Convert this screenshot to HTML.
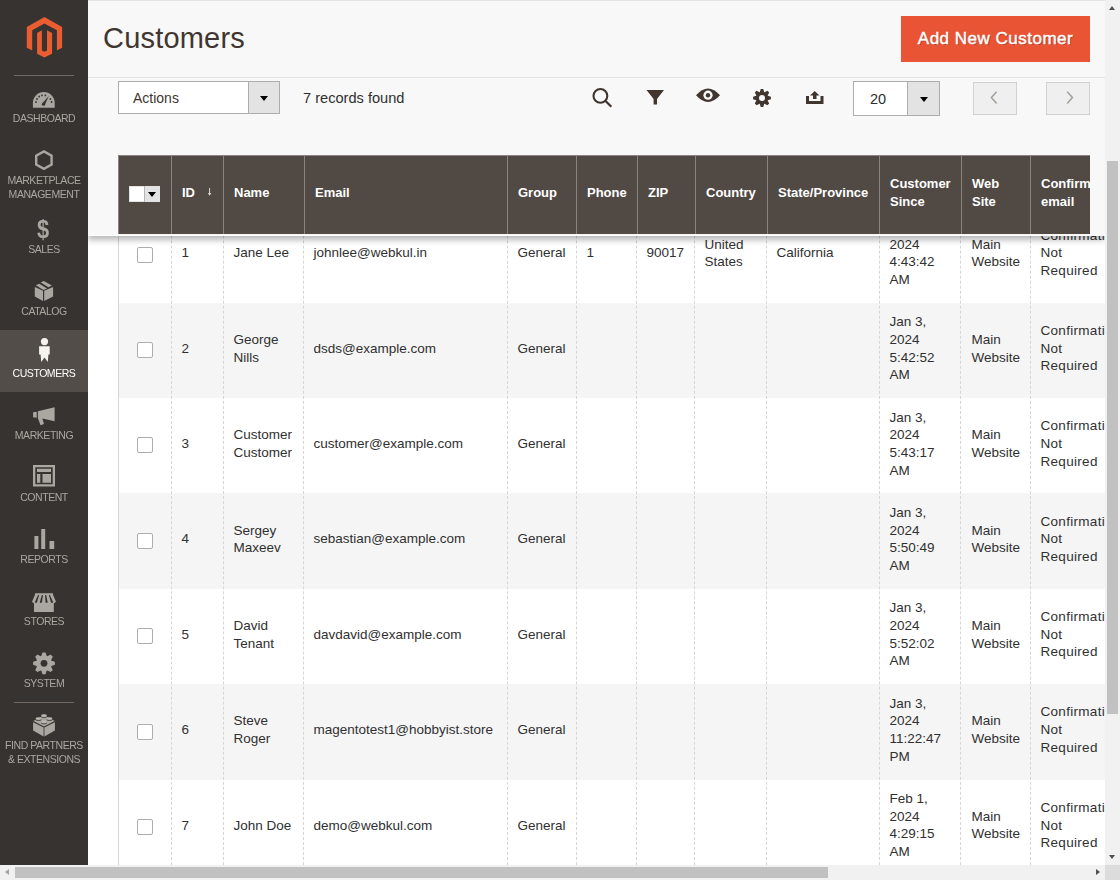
<!DOCTYPE html>
<html><head><meta charset="utf-8"><title>Customers</title>
<style>
html,body{margin:0;padding:0;width:1120px;height:880px;overflow:hidden;background:#fff;font-family:"Liberation Sans",sans-serif;}
.a{position:absolute;}
#side{position:absolute;left:0;top:0;width:88px;height:865px;background:#373330;will-change:transform;}
.mi{position:absolute;left:0;width:88px;text-align:center;color:#aaa6a0;font-size:10.5px;letter-spacing:-0.45px;line-height:14px;white-space:nowrap;}
.row{position:absolute;left:118px;width:1000px;height:96px;}
.cell{position:absolute;top:0;height:100px;display:flex;align-items:center;color:#303030;font-size:13.5px;line-height:17.68px;white-space:nowrap;}
.vd{position:absolute;top:0;width:0;height:865px;border-left:1px dashed #d6d6d6;}
.th{position:absolute;top:-2px;height:79px;display:flex;align-items:center;color:#fff;font-weight:bold;font-size:13px;line-height:17.5px;white-space:nowrap;}
.thd{position:absolute;top:0;width:1px;height:79px;background:#8a837f;}
</style></head><body>

<div class="a" style="left:88px;top:0;width:1017px;height:865px;overflow:hidden;background:#fff;">
<div class="a" style="left:-88px;top:0;width:1120px;height:865px;">
<div class="a" style="left:118px;top:207.40px;width:1000px;height:95.85px;background:#fff;"></div>
<div class="a" style="left:137px;top:246.75px;width:14px;height:14px;border:1px solid #adadad;background:#fff;border-radius:2px;"></div>
<div class="cell" style="left:181.5px;top:203.25px;">1</div>
<div class="cell" style="left:233.5px;top:203.25px;">Jane Lee</div>
<div class="cell" style="left:313.5px;top:203.25px;">johnlee@webkul.in</div>
<div class="cell" style="left:517.5px;top:203.25px;">General</div>
<div class="cell" style="left:586.5px;top:203.25px;">1</div>
<div class="cell" style="left:646.5px;top:203.25px;">90017</div>
<div class="cell" style="left:704.5px;top:203.25px;">United<br>States</div>
<div class="cell" style="left:776.5px;top:203.25px;">California</div>
<div class="cell" style="left:889.5px;top:203.25px;">Jan 3,<br>2024<br>4:43:42<br>AM</div>
<div class="cell" style="left:971.5px;top:203.25px;">Main<br>Website</div>
<div class="cell" style="left:1040.5px;top:203.25px;letter-spacing:0.3px;">Confirmation<br>Not<br>Required</div>
<div class="a" style="left:118px;top:302.75px;width:1000px;height:95.85px;background:#f5f5f5;"></div>
<div class="a" style="left:137px;top:342.10px;width:14px;height:14px;border:1px solid #adadad;background:#fff;border-radius:2px;"></div>
<div class="cell" style="left:181.5px;top:298.60px;">2</div>
<div class="cell" style="left:233.5px;top:298.60px;">George<br>Nills</div>
<div class="cell" style="left:313.5px;top:298.60px;">dsds@example.com</div>
<div class="cell" style="left:517.5px;top:298.60px;">General</div>
<div class="cell" style="left:889.5px;top:298.60px;">Jan 3,<br>2024<br>5:42:52<br>AM</div>
<div class="cell" style="left:971.5px;top:298.60px;">Main<br>Website</div>
<div class="cell" style="left:1040.5px;top:298.60px;letter-spacing:0.3px;">Confirmation<br>Not<br>Required</div>
<div class="a" style="left:118px;top:398.10px;width:1000px;height:95.85px;background:#fff;"></div>
<div class="a" style="left:137px;top:437.45px;width:14px;height:14px;border:1px solid #adadad;background:#fff;border-radius:2px;"></div>
<div class="cell" style="left:181.5px;top:393.95px;">3</div>
<div class="cell" style="left:233.5px;top:393.95px;">Customer<br>Customer</div>
<div class="cell" style="left:313.5px;top:393.95px;">customer@example.com</div>
<div class="cell" style="left:517.5px;top:393.95px;">General</div>
<div class="cell" style="left:889.5px;top:393.95px;">Jan 3,<br>2024<br>5:43:17<br>AM</div>
<div class="cell" style="left:971.5px;top:393.95px;">Main<br>Website</div>
<div class="cell" style="left:1040.5px;top:393.95px;letter-spacing:0.3px;">Confirmation<br>Not<br>Required</div>
<div class="a" style="left:118px;top:493.45px;width:1000px;height:95.85px;background:#f5f5f5;"></div>
<div class="a" style="left:137px;top:532.80px;width:14px;height:14px;border:1px solid #adadad;background:#fff;border-radius:2px;"></div>
<div class="cell" style="left:181.5px;top:489.30px;">4</div>
<div class="cell" style="left:233.5px;top:489.30px;">Sergey<br>Maxeev</div>
<div class="cell" style="left:313.5px;top:489.30px;">sebastian@example.com</div>
<div class="cell" style="left:517.5px;top:489.30px;">General</div>
<div class="cell" style="left:889.5px;top:489.30px;">Jan 3,<br>2024<br>5:50:49<br>AM</div>
<div class="cell" style="left:971.5px;top:489.30px;">Main<br>Website</div>
<div class="cell" style="left:1040.5px;top:489.30px;letter-spacing:0.3px;">Confirmation<br>Not<br>Required</div>
<div class="a" style="left:118px;top:588.80px;width:1000px;height:95.85px;background:#fff;"></div>
<div class="a" style="left:137px;top:628.15px;width:14px;height:14px;border:1px solid #adadad;background:#fff;border-radius:2px;"></div>
<div class="cell" style="left:181.5px;top:584.65px;">5</div>
<div class="cell" style="left:233.5px;top:584.65px;">David<br>Tenant</div>
<div class="cell" style="left:313.5px;top:584.65px;">davdavid@example.com</div>
<div class="cell" style="left:517.5px;top:584.65px;">General</div>
<div class="cell" style="left:889.5px;top:584.65px;">Jan 3,<br>2024<br>5:52:02<br>AM</div>
<div class="cell" style="left:971.5px;top:584.65px;">Main<br>Website</div>
<div class="cell" style="left:1040.5px;top:584.65px;letter-spacing:0.3px;">Confirmation<br>Not<br>Required</div>
<div class="a" style="left:118px;top:684.15px;width:1000px;height:95.85px;background:#f5f5f5;"></div>
<div class="a" style="left:137px;top:723.50px;width:14px;height:14px;border:1px solid #adadad;background:#fff;border-radius:2px;"></div>
<div class="cell" style="left:181.5px;top:680.00px;">6</div>
<div class="cell" style="left:233.5px;top:680.00px;">Steve<br>Roger</div>
<div class="cell" style="left:313.5px;top:680.00px;">magentotest1@hobbyist.store</div>
<div class="cell" style="left:517.5px;top:680.00px;">General</div>
<div class="cell" style="left:889.5px;top:680.00px;">Jan 3,<br>2024<br>11:22:47<br>PM</div>
<div class="cell" style="left:971.5px;top:680.00px;">Main<br>Website</div>
<div class="cell" style="left:1040.5px;top:680.00px;letter-spacing:0.3px;">Confirmation<br>Not<br>Required</div>
<div class="a" style="left:118px;top:779.50px;width:1000px;height:95.85px;background:#fff;"></div>
<div class="a" style="left:137px;top:818.85px;width:14px;height:14px;border:1px solid #adadad;background:#fff;border-radius:2px;"></div>
<div class="cell" style="left:181.5px;top:775.35px;">7</div>
<div class="cell" style="left:233.5px;top:775.35px;">John Doe</div>
<div class="cell" style="left:313.5px;top:775.35px;">demo@webkul.com</div>
<div class="cell" style="left:517.5px;top:775.35px;">General</div>
<div class="cell" style="left:889.5px;top:775.35px;">Feb 1,<br>2024<br>4:29:15<br>AM</div>
<div class="cell" style="left:971.5px;top:775.35px;">Main<br>Website</div>
<div class="cell" style="left:1040.5px;top:775.35px;letter-spacing:0.3px;">Confirmation<br>Not<br>Required</div>
<div class="a" style="left:118px;top:0;width:1px;height:865px;background:#d6d6d6;"></div>
<div class="vd" style="left:171px;"></div>
<div class="vd" style="left:223px;"></div>
<div class="vd" style="left:303px;"></div>
<div class="vd" style="left:507px;"></div>
<div class="vd" style="left:576px;"></div>
<div class="vd" style="left:636px;"></div>
<div class="vd" style="left:694px;"></div>
<div class="vd" style="left:766px;"></div>
<div class="vd" style="left:879px;"></div>
<div class="vd" style="left:960px;"></div>
<div class="vd" style="left:1030px;"></div>
</div></div>
<div class="a" style="left:88px;top:0;width:1017px;height:236px;background:#f8f8f8;border-bottom:0;box-shadow:0 4px 6px 0 rgba(0,0,0,0.28);overflow:hidden;">
<div class="a" style="left:-88px;top:0;width:1120px;height:236px;">
<div class="a" style="left:88px;top:235px;width:1017px;height:1px;background:#fff;"></div>
<div class="a" style="left:88px;top:0;width:1017px;height:1px;background:#e3e3e3;"></div>
<div class="a" style="left:88px;top:77px;width:1017px;height:1px;background:#e3e3e3;"></div>
<div class="a" style="left:103px;top:18.5px;font-size:29px;line-height:38px;color:#41362f;letter-spacing:0.2px;white-space:nowrap;">Customers</div>
<div class="a" style="left:901px;top:16px;width:189px;height:46px;background:#e85434;"></div>
<div class="a" style="left:901px;top:16px;width:189px;height:46px;line-height:46px;text-align:center;color:#fff;font-weight:normal;font-size:17px;letter-spacing:0.5px;-webkit-text-stroke:0.45px #fff;text-shadow:1px 1px 0 rgba(0,0,0,0.25);white-space:nowrap;">Add New Customer</div>
<div class="a" style="left:118px;top:81px;width:160px;height:31px;border:1px solid #adadad;background:#fff;"></div>
<div class="a" style="left:248px;top:82px;width:30px;height:31px;border-left:1px solid #adadad;background:#e3e3e3;"></div>
<div class="a" style="left:260px;top:96px;width:0;height:0;border-left:4px solid transparent;border-right:4px solid transparent;border-top:5px solid #000;"></div>
<div class="a" style="left:133px;top:88px;font-size:14px;line-height:20px;color:#41362f;white-space:nowrap;">Actions</div>
<div class="a" style="left:303px;top:88px;font-size:14.6px;line-height:20px;color:#303030;white-space:nowrap;">7 records found</div>
<div class="a" style="left:853px;top:81px;width:85px;height:33px;border:1px solid #adadad;background:#fff;"></div>
<div class="a" style="left:907px;top:82px;width:31px;height:33px;border-left:1px solid #adadad;background:#e3e3e3;"></div>
<div class="a" style="left:920px;top:97px;width:0;height:0;border-left:4px solid transparent;border-right:4px solid transparent;border-top:5px solid #000;"></div>
<div class="a" style="left:870px;top:89px;font-size:14.5px;line-height:20px;color:#303030;white-space:nowrap;">20</div>
<div class="a" style="left:973px;top:82px;width:42px;height:31px;border:1px solid #d1d1d1;background:#efefef;"></div>
<svg class="a" style="left:973px;top:82px;" width="44" height="33" viewBox="0 0 44 33"><path d="M23.6 9.8 L18.4 15.6 L23.6 21.4" fill="none" stroke="#a39f9a" stroke-width="1.5"/></svg>
<div class="a" style="left:1046px;top:82px;width:42px;height:31px;border:1px solid #d1d1d1;background:#efefef;"></div>
<svg class="a" style="left:1046px;top:82px;" width="44" height="33" viewBox="0 0 44 33"><path d="M21.2 9.8 L26.4 15.6 L21.2 21.4" fill="none" stroke="#a39f9a" stroke-width="1.5"/></svg>
<svg class="a" style="left:588px;top:84px;" width="240" height="28" viewBox="588 84 240 28">
<circle cx="600.4" cy="95.9" r="6.9" fill="none" stroke="#41362f" stroke-width="2.1"/>
<path d="M605.3 100.8 L611.3 106.8" stroke="#41362f" stroke-width="2.3"/>
<path d="M646.5 90 L664 90 L657 99 L657 104.5 L653.6 104.5 L653.6 99 Z" fill="#41362f"/>
<path d="M696 95.2 Q708 81.8 720 95.2 Q708 108.6 696 95.2 Z" fill="#41362f"/>
<circle cx="708" cy="95.2" r="4.6" fill="#f8f8f8"/>
<circle cx="708" cy="95.2" r="2.2" fill="#41362f"/>

<path d="M759.76 92.22 L760.74 89.09 L763.26 89.09 L764.24 92.22 L764.50 92.33 L767.41 90.81 L769.19 92.59 L767.67 95.50 L767.78 95.76 L770.91 96.74 L770.91 99.26 L767.78 100.24 L767.67 100.50 L769.19 103.41 L767.41 105.19 L764.50 103.67 L764.24 103.78 L763.26 106.91 L760.74 106.91 L759.76 103.78 L759.50 103.67 L756.59 105.19 L754.81 103.41 L756.33 100.50 L756.22 100.24 L753.09 99.26 L753.09 96.74 L756.22 95.76 L756.33 95.50 L754.81 92.59 L756.59 90.81 L759.50 92.33 Z" fill="#41362f"/><circle cx="762" cy="98" r="3.0" fill="#f8f8f8"/>
<path d="M806 96 L809 96 L809 101 L820.5 101 L820.5 96 L823.5 96 L823.5 104 L806 104 Z" fill="#41362f"/>
<path d="M814.7 91 L819.5 95.5 L816.5 95.5 L816.5 99 L813 99 L813 95.5 L810 95.5 Z" fill="#41362f"/>
</svg>
<div class="a" style="left:118px;top:155px;width:972px;height:79px;background:#514943;overflow:hidden;">
<div class="a" style="left:-118px;top:0;width:1120px;height:79px;">
<div class="thd" style="left:118px;"></div>
<div class="a" style="left:118px;top:0;width:972px;height:1px;background:#8a837f;"></div>
<div class="thd" style="left:171px;"></div>
<div class="thd" style="left:223px;"></div>
<div class="thd" style="left:304px;"></div>
<div class="thd" style="left:507px;"></div>
<div class="thd" style="left:576px;"></div>
<div class="thd" style="left:637px;"></div>
<div class="thd" style="left:695px;"></div>
<div class="thd" style="left:767px;"></div>
<div class="thd" style="left:879px;"></div>
<div class="thd" style="left:961px;"></div>
<div class="thd" style="left:1030px;"></div>
<div class="th" style="left:182px;">ID</div>
<div class="th" style="left:234px;">Name</div>
<div class="th" style="left:315px;">Email</div>
<div class="th" style="left:518px;">Group</div>
<div class="th" style="left:587px;">Phone</div>
<div class="th" style="left:648px;">ZIP</div>
<div class="th" style="left:706px;">Country</div>
<div class="th" style="left:778px;">State/Province</div>
<div class="th" style="left:890px;">Customer<br>Since</div>
<div class="th" style="left:972px;">Web<br>Site</div>
<div class="th" style="left:1041px;">Confirmation<br>email</div>
<svg class="a" style="left:200px;top:28px;" width="20" height="20" viewBox="200 183 20 20"><path d="M209.6 188 L209.6 195" stroke="#d9d9d9" stroke-width="1"/><path d="M207.9 193 L211.3 193 L209.6 195.8 Z" fill="#d9d9d9"/></svg>
<div class="a" style="left:129px;top:31px;width:31px;height:16px;background:#e3e3e3;"></div>
<div class="a" style="left:130px;top:32px;width:14px;height:14px;background:#fff;"></div>
<div class="a" style="left:144px;top:31px;width:1px;height:16px;background:#b5b5b5;"></div>
<div class="a" style="left:148px;top:37px;width:0;height:0;border-left:4px solid transparent;border-right:4px solid transparent;border-top:5px solid #000;"></div>
</div></div>
</div></div>
<div id="side">
<svg class="a" style="left:0;top:0;" width="88" height="70" viewBox="0 0 88 70">
<path d="M44.4 17.1 L62.1 27.1 L62.1 47.8 L56.9 50.4 L56.9 30.2 L44.4 23.6 L32.2 30.2 L32.2 50.4 L26.8 47.8 L26.8 27.1 Z" fill="#ea5d31"/>
<path d="M37.1 33 L41.9 30.2 L41.9 50.6 L44.4 51.8 L47 50.6 L47 30.2 L52.1 33 L52.1 53.8 L44.4 57.5 L37.1 53.8 Z" fill="#ea5d31"/>
</svg>
<div class="a" style="left:14px;top:75px;width:60px;height:1px;background:#736963;"></div>
<div class="a" style="left:0;top:330px;width:88px;height:62px;background:#524d49;"></div>
<div class="a" style="left:14px;top:702px;width:60px;height:1px;background:#736963;"></div>
<div class="mi" style="top:111px;color:#aaa6a0;">DASHBOARD</div>
<div class="mi" style="top:173px;color:#aaa6a0;">MARKETPLACE<br>MANAGEMENT</div>
<div class="mi" style="top:242px;color:#aaa6a0;">SALES</div>
<div class="mi" style="top:304px;color:#aaa6a0;">CATALOG</div>
<div class="mi" style="top:366px;color:#fff;">CUSTOMERS</div>
<div class="mi" style="top:428px;color:#aaa6a0;">MARKETING</div>
<div class="mi" style="top:490px;color:#aaa6a0;">CONTENT</div>
<div class="mi" style="top:552px;color:#aaa6a0;">REPORTS</div>
<div class="mi" style="top:614px;color:#aaa6a0;">STORES</div>
<div class="mi" style="top:676px;color:#aaa6a0;">SYSTEM</div>
<div class="mi" style="top:738px;color:#aaa6a0;">FIND PARTNERS<br>&amp; EXTENSIONS</div>
<svg class="a" style="left:0;top:80px;" width="88" height="700" viewBox="0 80 88 700">
<path d="M32.9 107.75 L32.9 103 A10.9 11 0 0 1 54.7 103 L54.7 107.75 Z" fill="#aaa6a0"/>
<g fill="#373330"><circle cx="36" cy="102" r="0.9"/><circle cx="37" cy="99" r="0.9"/><circle cx="39.2" cy="96.5" r="0.9"/><circle cx="42" cy="95.4" r="0.9"/><circle cx="45.4" cy="95.4" r="0.9"/><circle cx="50.4" cy="99" r="0.9"/><circle cx="51.6" cy="102" r="0.9"/>
<path d="M42.2 103.6 L48.8 96 L44.8 105 Z"/><circle cx="43.5" cy="104.2" r="1.6"/></g>
<path d="M43.9 151.4 L51.6 155.6 L51.6 164.6 L43.9 168.9 L36.2 164.6 L36.2 155.6 Z" fill="none" stroke="#aaa6a0" stroke-width="2.4"/>
<path d="M34.8 287.1 L43 290.7 L43 301.1 L34.8 296.6 Z M44.2 290.7 L53.1 286.9 L53.1 296.5 L44.2 301.1 Z M35.8 285.2 L39.3 283.7 L47.1 288.6 L43.5 290 Z M40.8 282.5 L43.7 280.9 L51.9 285.5 L48.5 287.3 Z" fill="#aaa6a0"/>
<circle cx="44.5" cy="341.6" r="3.6" fill="#f7f3ee"/>
<path d="M39.1 346.2 L49.7 346.2 L49.7 354.5 L48.4 354.5 L47.8 362 L44.5 357.4 L41.2 362 L40.6 354.5 L39.1 354.5 Z" fill="#f7f3ee"/>
<path d="M37.9 411.3 L54.6 407.3 L54.6 421.3 L42.4 418.6 L44 423.9 L40.6 425.2 L37.9 418.2 Z M33.1 412.3 L36.7 411.8 L36.7 417.7 L33.1 417.2 Z" fill="#aaa6a0"/>
<path d="M33 465 L55 465 L55 486.6 L33 486.6 Z M35.3 467.3 L35.3 484.3 L52.7 484.3 L52.7 467.3 Z" fill="#aaa6a0" fill-rule="evenodd"/>
<path d="M37 468.8 L51 468.8 L51 472 L37 472 Z M37 474 L40.3 474 L40.3 482.8 L37 482.8 Z M42.5 474 L51 474 L51 482.8 L42.5 482.8 Z" fill="#aaa6a0"/>
<path d="M34.4 536 L38.4 536 L38.4 549 L34.4 549 Z M41.2 529 L45.2 529 L45.2 549 L41.2 549 Z M49.5 541 L54.2 541 L54.2 549 L49.5 549 Z" fill="#aaa6a0"/>
<path d="M35 593.2 L53 593.2 L53 594.8 L56 601.8 L53.8 603.5 L53.8 612 L34 612 L34 603.5 L32 601.8 L35 594.8 Z" fill="#aaa6a0"/>
<g fill="#373330"><path d="M38.050000000000004 595 L39.15 595 L37.0 602.2 Q35.9 603.6 34.8 602.2 Z"/><path d="M41.85 595 L42.949999999999996 595 L42.0 602.2 Q40.9 603.6 39.8 602.2 Z"/><path d="M45.050000000000004 595 L46.15 595 L47.7 602.2 Q46.6 603.6 45.5 602.2 Z"/><path d="M48.85 595 L49.949999999999996 595 L53.1 602.2 Q52.0 603.6 50.9 602.2 Z"/></g>
<path d="M33.1 722.2 L43.6 727.6 L43.6 736.4 L33.1 730.6 Z M44.4 727.6 L54.9 722.2 L54.9 730.4 L44.4 736.4 Z" fill="#aaa6a0"/>
<path d="M33.3 721 L44 715.3 L54.7 721 L44 726.6 Z" fill="#aaa6a0"/>
<g fill="#5a5550"><ellipse cx="44" cy="716.6" rx="3" ry="1.6"/><ellipse cx="38.5" cy="719.5" rx="3" ry="1.6"/><ellipse cx="49.5" cy="719.5" rx="3" ry="1.6"/><ellipse cx="44" cy="722.8" rx="3" ry="1.6"/></g>
<g fill="#bab6b0"><ellipse cx="44" cy="715.7" rx="2.9" ry="1.4"/><ellipse cx="38.5" cy="718.6" rx="2.9" ry="1.4"/><ellipse cx="49.5" cy="718.6" rx="2.9" ry="1.4"/><ellipse cx="44" cy="721.9" rx="2.9" ry="1.4"/></g>

<path d="M41.37 655.85 L42.47 652.41 L45.53 652.41 L46.63 655.85 L47.40 656.17 L50.62 654.51 L52.79 656.68 L51.13 659.90 L51.45 660.67 L54.89 661.77 L54.89 664.83 L51.45 665.93 L51.13 666.70 L52.79 669.92 L50.62 672.09 L47.40 670.43 L46.63 670.75 L45.53 674.19 L42.47 674.19 L41.37 670.75 L40.60 670.43 L37.38 672.09 L35.21 669.92 L36.87 666.70 L36.55 665.93 L33.11 664.83 L33.11 661.77 L36.55 660.67 L36.87 659.90 L35.21 656.68 L37.38 654.51 L40.60 656.17 Z" fill="#aaa6a0"/><circle cx="44" cy="663.3" r="3.4" fill="#373330"/>
</svg>
<div class="a" style="left:35.35px;top:214px;width:16px;font-size:26px;line-height:30px;font-weight:bold;color:#aaa6a0;text-align:center;transform:scaleX(0.84);">$</div>
</div>
<div class="a" style="left:1105px;top:0;width:15px;height:865px;background:#f1f1f1;"></div>
<div class="a" style="left:1107px;top:161px;width:11px;height:553px;background:#c1c1c1;"></div>
<div class="a" style="left:1108.5px;top:6px;width:0;height:0;border-left:3.75px solid transparent;border-right:3.75px solid transparent;border-bottom:4px solid #505050;"></div>
<div class="a" style="left:1108.5px;top:855px;width:0;height:0;border-left:3.75px solid transparent;border-right:3.75px solid transparent;border-top:4px solid #505050;"></div>
<div class="a" style="left:0;top:865px;width:1105px;height:15px;background:#f1f1f1;"></div>
<div class="a" style="left:15px;top:867px;width:813px;height:11px;background:#c1c1c1;"></div>
<div class="a" style="left:5px;top:868.75px;width:0;height:0;border-top:3.75px solid transparent;border-bottom:3.75px solid transparent;border-right:4px solid #a3a3a3;"></div>
<div class="a" style="left:1096px;top:868.75px;width:0;height:0;border-top:3.75px solid transparent;border-bottom:3.75px solid transparent;border-left:4px solid #505050;"></div>
<div class="a" style="left:1105px;top:865px;width:15px;height:15px;background:#dcdcdc;"></div>
</body></html>
